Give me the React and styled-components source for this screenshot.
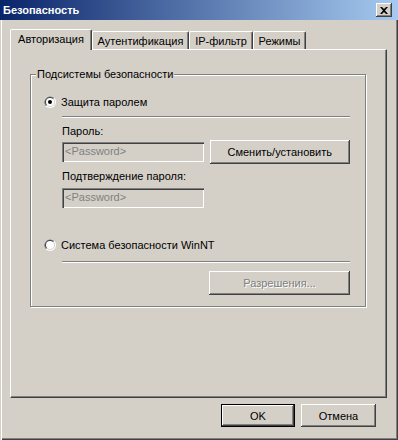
import React from 'react';
import styled, { createGlobalStyle } from 'styled-components';

const GlobalStyle = createGlobalStyle`
  html, body {
    margin: 0;
    padding: 0;
    background: #d4d0c8;
  }
  body {
    font-family: 'Liberation Sans', Arial, sans-serif;
    font-size: 11px;
    color: #000;
  }
`;

const Window = styled.div`
  width: 398px;
  height: 440px;
  box-sizing: border-box;
  background: #d4d0c8;
  display: flex;
  flex-direction: column;
  box-shadow: inset 1px 0 #d4d0c8, inset 2px 0 #fff, inset -1px -1px #404040,
    inset -2px -2px #808080;
`;

const TitleBar = styled.div`
  height: 20px;
  flex: none;
  display: flex;
  align-items: center;
  justify-content: space-between;
  padding: 0 6px 0 3px;
  background: linear-gradient(to right, #0a246a, #a6caf0);
  color: #fff;
  font-weight: bold;
  font-size: 11px;
`;

const CloseButton = styled.div`
  width: 16px;
  height: 14px;
  box-sizing: border-box;
  background: #d4d0c8;
  display: flex;
  align-items: center;
  justify-content: center;
  box-shadow: inset -1px -1px #404040, inset 1px 1px #fff, inset -2px -2px #808080;
`;

const Body = styled.div`
  display: flex;
  flex-direction: column;
  padding: 9px 11px 0 10px;
`;

const TabStrip = styled.div`
  display: flex;
  align-items: flex-end;
  height: 20px;
  position: relative;
  z-index: 1;
`;

const Tab = styled.div`
  width: ${({ w }) => w}px;
  height: ${({ active }) => (active ? 21 : 18)}px;
  margin-bottom: ${({ active }) => (active ? -1 : 0)}px;
  box-sizing: border-box;
  background: #d4d0c8;
  border-left: 1px solid #fff;
  border-top: 1px solid #fff;
  border-top-left-radius: 2px;
  border-right: 1px solid #404040;
  border-top-right-radius: 2px;
  box-shadow: inset -1px 0 #808080;
  display: flex;
  justify-content: center;
  padding-top: ${({ active }) => (active ? 3 : 3)}px;
  white-space: nowrap;
`;

const Panel = styled.div`
  width: 377px;
  height: 349px;
  box-sizing: border-box;
  border-top: 1px solid #fff;
  border-left: 1px solid #fff;
  border-right: 1px solid #404040;
  border-bottom: 1px solid #404040;
  box-shadow: inset -1px -1px #808080;
  padding: 24px 0 0 19px;
`;

const GroupBox = styled.div`
  position: relative;
  width: 336px;
  height: 233px;
  box-sizing: border-box;
  border: 1px solid #808080;
  box-shadow: inset 1px 1px #fff, 1px 1px #fff;
  padding: 20px 0 0 13px;
`;

const Legend = styled.span`
  position: absolute;
  top: -7px;
  left: 5px;
  padding: 0 1px;
  background: #d4d0c8;
  line-height: 13px;
`;

const RadioRow = styled.div`
  display: flex;
  align-items: center;
  gap: 5px;
  height: 13px;
  margin-top: ${({ mt }) => mt || 0}px;
`;

const Section = styled.div`
  display: flex;
  flex-direction: column;
  margin-left: 18px;
  width: 288px;
`;

const Separator = styled.div`
  height: 1px;
  background: #808080;
  border-bottom: 1px solid #fff;
  margin-top: ${({ mt }) => mt}px;
`;

const Label = styled.div`
  line-height: 13px;
  margin-top: ${({ mt }) => mt}px;
`;

const FieldRow = styled.div`
  display: flex;
  align-items: center;
  gap: 6px;
  margin-top: ${({ mt }) => mt}px;
`;

const Input = styled.div`
  width: 142px;
  height: 20px;
  box-sizing: border-box;
  padding: 3px 0 0 3px;
  color: #808080;
  background: #d4d0c8;
  box-shadow: inset 1px 1px #808080, inset 2px 2px #404040, inset -1px -1px #fff,
    inset -2px -2px #d4d0c8;
  line-height: 13px;
`;

const Button = styled.div`
  width: ${({ w }) => w}px;
  height: ${({ h }) => h || 24}px;
  box-sizing: border-box;
  display: flex;
  align-items: center;
  justify-content: center;
  background: #d4d0c8;
  color: ${({ disabled }) => (disabled ? '#808080' : '#000')};
  text-shadow: ${({ disabled }) => (disabled ? '1px 1px #fff' : 'none')};
  border: ${({ isDefault }) => (isDefault ? '1px solid #000' : 'none')};
  box-shadow: inset -1px -1px #404040, inset 1px 1px #fff, inset -2px -2px #808080;
  margin-top: ${({ mt }) => mt || 0}px;
  margin-left: ${({ ml }) => ml || 0}px;
  align-self: ${({ right }) => (right ? 'flex-end' : 'auto')};
`;

const Footer = styled.div`
  display: flex;
  justify-content: flex-end;
  gap: 6px;
  padding: 6px 11px 0 0;
`;

const Radio = ({ checked }) => (
  <svg width="12" height="12" viewBox="0 0 12 12">
    <circle cx="6" cy="6" r="6" fill="#fff" />
    <path d="M1.76 10.24 A6 6 0 0 1 10.24 1.76 Z" fill="#808080" />
    <circle cx="6" cy="6" r="5" fill="#d4d0c8" />
    <path d="M2.46 9.54 A5 5 0 0 1 9.54 2.46 Z" fill="#404040" />
    <circle cx="6" cy="6" r="4" fill="#fff" />
    {checked && <circle cx="6" cy="6" r="2" fill="#000" />}
  </svg>
);

const tabs = [
  { label: 'Авторизация', w: 82, active: true },
  { label: 'Аутентификация', w: 97 },
  { label: 'IP-фильтр', w: 64 },
  { label: 'Режимы', w: 53 },
];

export default function App() {
  return (
    <>
      <GlobalStyle />
      <Window>
        <TitleBar>
          <span>Безопасность</span>
          <CloseButton>
            <svg width="8" height="7" viewBox="0 0 8 7">
              <path d="M0 0h2l2 2 2-2h2L5 3.5 8 7H6L4 5 2 7H0l3-3.5z" fill="#000" />
            </svg>
          </CloseButton>
        </TitleBar>
        <Body>
          <TabStrip>
            {tabs.map((t) => (
              <Tab key={t.label} w={t.w} active={t.active}>
                {t.label}
              </Tab>
            ))}
          </TabStrip>
          <Panel>
            <GroupBox>
              <Legend>Подсистемы безопасности</Legend>
              <RadioRow>
                <Radio checked />
                <span>Защита паролем</span>
              </RadioRow>
              <Section>
                <Separator mt={8} />
                <Label mt={7}>Пароль:</Label>
                <FieldRow mt={2}>
                  <Input>&lt;Password&gt;</Input>
                  <Button w={141}>Сменить/установить</Button>
                </FieldRow>
                <Label mt={6}>Подтверждение пароля:</Label>
                <FieldRow mt={5}>
                  <Input>&lt;Password&gt;</Input>
                </FieldRow>
              </Section>
              <RadioRow mt={30}>
                <Radio />
                <span>Система безопасности WinNT</span>
              </RadioRow>
              <Section>
                <Separator mt={10} />
                <Button w={141} mt={8} right disabled>
                  Разрешения...
                </Button>
              </Section>
            </GroupBox>
          </Panel>
          <Footer>
            <Button w={74} h={23} isDefault>
              OK
            </Button>
            <Button w={75} h={23}>
              Отмена
            </Button>
          </Footer>
        </Body>
      </Window>
    </>
  );
}
